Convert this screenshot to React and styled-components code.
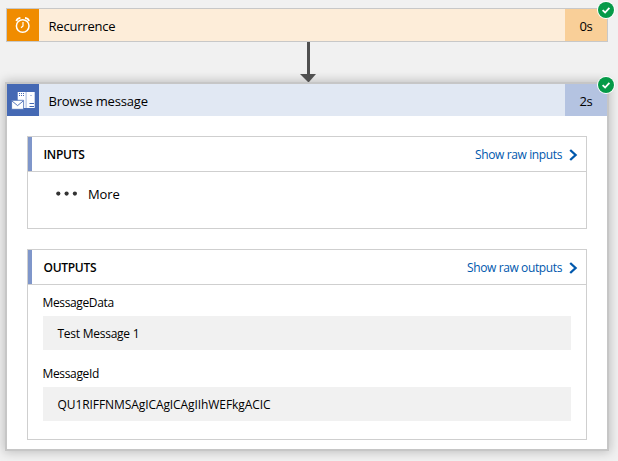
import React from "react";
import styled, { createGlobalStyle } from "styled-components";

const GlobalStyle = createGlobalStyle`
  *, *::before, *::after { box-sizing: border-box; }
  html, body { margin: 0; background: #f1f1f1; }
  body { font-family: "Segoe UI", "Open Sans", "Noto Sans", sans-serif; color: #000; overflow: hidden; }
`;

const Canvas = styled.main`
  display: flex;
  flex-direction: column;
  width: 618px;
  height: 461px;
  padding: 8px 0 0 6px;
  background: #f1f1f1;
`;

const TriggerCard = styled.section`
  position: relative;
  width: 602px;
  height: 34px;
  border: 1px solid #c8c8c8;
`;

const ActionCard = styled.section`
  position: relative;
  width: 600px;
  height: 365px;
  margin: 2px 0 0 1px;
  background: #fff;
  box-shadow: 0 0 0 2px #c6c6c6, 0 0 10px 3px rgba(0, 0, 0, 0.22);
`;

const CardHeader = styled.header`
  display: flex;
  height: 32px;
  background: ${(p) => p.$bg};
`;

const IconTile = styled.div`
  width: 32px;
  height: 32px;
  background: ${(p) => p.$bg};
  svg { display: block; }
`;

const Text = styled.span`
  display: block;
  white-space: nowrap;
  font-size: ${(p) => p.$size || 12}px;
  font-weight: ${(p) => p.$weight || 400};
  letter-spacing: ${(p) => p.$track || 0}px;
`;

const CardTitle = styled(Text)`
  flex: 1;
  padding-left: 9.5px;
  line-height: 34px;
`;

const Duration = styled.div`
  display: flex;
  justify-content: center;
  width: 42px;
  line-height: 34px;
  background: ${(p) => p.$bg};
`;

const StatusBadge = styled.svg`
  position: absolute;
  top: -8px;
  right: -7.5px;
  width: 18px;
  height: 18px;
`;

const Connector = styled.svg`
  display: block;
  flex: none;
  position: relative;
  z-index: 1;
  width: 18px;
  height: 40px;
  margin-left: 293px;
`;

const CardBody = styled.div`
  display: flex;
  flex-direction: column;
  gap: 20px;
  padding: 20px;
`;

const Panel = styled.section`
  width: 560px;
  height: ${(p) => p.$height}px;
  border: 1px solid #cfcfcf;
`;

const PanelHeader = styled.header`
  display: flex;
  align-items: center;
  justify-content: space-between;
  height: 35px;
  padding: 2px 8px 0 15.5px;
  border-bottom: 1px solid #cfcfcf;
  background: linear-gradient(#7f96ca, #7f96ca) left / 4px 100% no-repeat;
  line-height: 32px;
`;

const RawLink = styled.a`
  display: flex;
  align-items: center;
  gap: 7px;
  color: #0058ad;
`;

const MoreRow = styled.div`
  display: flex;
  align-items: center;
  gap: 10px;
  height: 44px;
  padding-left: 28px;
`;

const Fields = styled.div`
  padding: 7px 15px 0;
`;

const Field = styled.div`
  height: 71px;
`;

const FieldLabel = styled(Text)`
  height: 24px;
  margin-left: -0.5px;
  line-height: 22px;
`;

const FieldValue = styled.div`
  height: 34px;
  padding-left: 14.5px;
  line-height: 36px;
  background: #f1f1f1;
`;

const Badge = () => (
  <StatusBadge viewBox="0 0 18 18">
    <circle cx="9" cy="9" r="9" fill="#fff" />
    <circle cx="9" cy="9" r="8" fill="#059a48" />
    <path d="M5.6 9.2 8.1 11.5 12.4 6.8" fill="none" stroke="#fff" strokeWidth="1.8" />
  </StatusBadge>
);

const AlarmIcon = () => (
  <svg width="32" height="32" viewBox="0 0 32 32" fill="none" stroke="#fff">
    <circle cx="15.7" cy="17" r="6.3" strokeWidth="1.5" />
    <path d="M16 13v4l-2 1.8" strokeWidth="1.2" />
    <path d="M9.4 12.2c.3-1.9 1.7-3.1 4-3.3M22 12.2c-.3-1.9-1.7-3.1-4-3.3" strokeWidth="1.8" />
  </svg>
);

const QueueIcon = () => (
  <svg width="32" height="32" viewBox="0 0 32 32">
    <path fill="#fff" d="M10.7 8h8.1v16h-8.1zM19.3 8h8.4v16h-8.4z" />
    <path stroke="#4569b4" strokeDasharray="1 1" d="M12 9.5h6M12 11.5h6" />
    <path stroke="#4569b4" d="M22.5 19.5h4.5M22.5 22.5h4.5" />
    <path stroke="#4569b4" strokeWidth=".8" d="M24 11v1" />
    <path fill="#fff" stroke="#4569b4" strokeWidth=".8" d="M4.6 16.3h12v9h-12z" />
    <path fill="none" stroke="#4569b4" strokeWidth=".9" d="m5 17 5.6 4.6L16.2 17" />
  </svg>
);

const Chevron = () => (
  <svg width="9" height="12" viewBox="0 0 9 12">
    <path d="M1.2 1 6.6 6 1.2 11" fill="none" stroke="#0058ad" strokeWidth="2.3" />
  </svg>
);

const Dots = () => (
  <svg width="22" height="6" viewBox="0 0 22 6" fill="#333">
    <circle cx="2.3" cy="2.6" r="2.1" />
    <circle cx="10.6" cy="2.6" r="2.1" />
    <circle cx="18.9" cy="2.6" r="2.1" />
  </svg>
);

const RawAction = ({ children }) => (
  <RawLink>
    <Text $track={-0.38}>{children}</Text>
    <Chevron />
  </RawLink>
);

const DataField = ({ label, labelTrack, value, valueTrack }) => (
  <Field>
    <FieldLabel $track={labelTrack}>{label}</FieldLabel>
    <FieldValue>
      <Text $track={valueTrack}>{value}</Text>
    </FieldValue>
  </Field>
);

export default function App() {
  return (
    <>
      <GlobalStyle />
      <Canvas>
        <TriggerCard>
          <CardHeader $bg="#fdedd9">
            <IconTile $bg="#f08c00"><AlarmIcon /></IconTile>
            <CardTitle $size={13} $track={-0.2}>Recurrence</CardTitle>
            <Duration $bg="#f9cf98"><Text $size={13} $track={-0.2}>0s</Text></Duration>
          </CardHeader>
          <Badge />
        </TriggerCard>
        <Connector viewBox="0 0 18 40">
          <path fill="#505050" d="M8 0h3v32h6l-7 8H9l-8-8h7z" />
        </Connector>
        <ActionCard>
          <CardHeader $bg="#e1e8f3">
            <IconTile $bg="#4569b4"><QueueIcon /></IconTile>
            <CardTitle $size={13} $track={-0.18}>Browse message</CardTitle>
            <Duration $bg="#b4c3e1"><Text $size={13} $track={-0.2}>2s</Text></Duration>
          </CardHeader>
          <Badge />
          <CardBody>
            <Panel $height={93}>
              <PanelHeader>
                <Text $weight={600} $track={-0.3}>INPUTS</Text>
                <RawAction>Show raw inputs</RawAction>
              </PanelHeader>
              <MoreRow>
                <Dots />
                <Text $size={13} $track={-0.15}>More</Text>
              </MoreRow>
            </Panel>
            <Panel $height={191}>
              <PanelHeader>
                <Text $weight={600} $track={-0.3}>OUTPUTS</Text>
                <RawAction>Show raw outputs</RawAction>
              </PanelHeader>
              <Fields>
                <DataField label="MessageData" labelTrack={-0.36} value="Test Message 1" valueTrack={-0.25} />
                <DataField label="MessageId" labelTrack={-0.34} value="QU1RIFFNMSAgICAgICAgIIhWEFkgACIC" valueTrack={-0.08} />
              </Fields>
            </Panel>
          </CardBody>
        </ActionCard>
      </Canvas>
    </>
  );
}
